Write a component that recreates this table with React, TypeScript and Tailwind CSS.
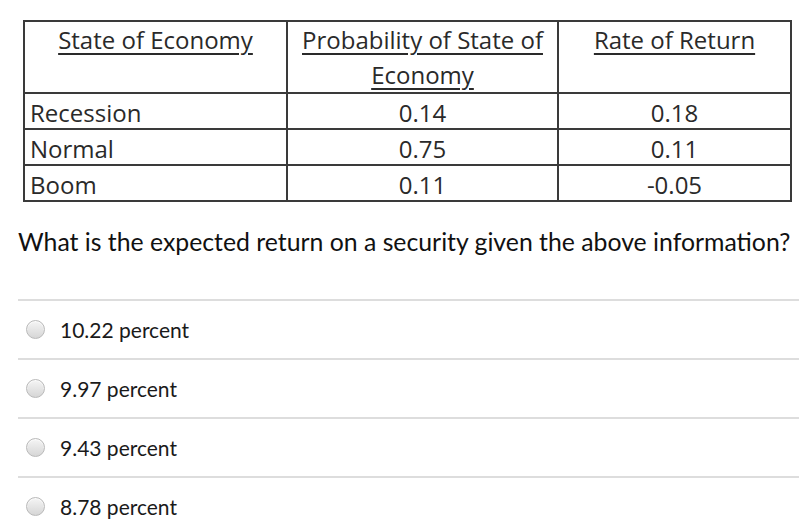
import React from 'react';

const rows = [
  { state: 'Recession', prob: '0.14', rate: '0.18' },
  { state: 'Normal', prob: '0.75', rate: '0.11' },
  { state: 'Boom', prob: '0.11', rate: '-0.05' },
];

const options = ['10.22 percent', '9.97 percent', '9.43 percent', '8.78 percent'];

const Radio: React.FC = () => (
  <span className="inline-block w-[19px] h-[19px] rounded-full border border-[#b9b9b9] bg-gradient-to-b from-[#f5f5f5] to-[#d6d6d6] shadow-[inset_0_1px_1px_rgba(255,255,255,0.8)]" />
);

export default function App() {
  return (
    <div className="w-[812px] h-[531px] overflow-hidden bg-white pt-[20px]">
      <table
        className="ml-[23px] w-[769px] border-collapse text-[#2a2a2a] text-[24px]"
        style={{ fontFamily: '"Open Sans", "Liberation Sans", sans-serif' }}
      >
        <thead>
          <tr className="h-[71px]">
            <th className="w-[263px] border-2 border-[#3a3a3a] align-top font-normal leading-[35px] pt-0">
              <span className="underline underline-offset-[4px] decoration-[1.5px]">State of Economy</span>
            </th>
            <th className="w-[271px] border-2 border-[#3a3a3a] align-top font-normal leading-[35px] pt-0">
              <span className="underline underline-offset-[4px] decoration-[1.5px]">Probability of State of</span>
              <br />
              <span className="underline underline-offset-[4px] decoration-[1.5px]">Economy</span>
            </th>
            <th className="border-2 border-[#3a3a3a] align-top font-normal leading-[35px] pt-0">
              <span className="underline underline-offset-[4px] decoration-[1.5px]">Rate of Return</span>
            </th>
          </tr>
        </thead>
        <tbody>
          {rows.map(r => (
            <tr key={r.state} className="h-[36px]">
              <td className="border-2 border-[#3a3a3a] pl-[5px] leading-[31px] pt-[2px]">{r.state}</td>
              <td className="border-2 border-[#3a3a3a] text-center leading-[31px] pt-[2px]">{r.prob}</td>
              <td className="border-2 border-[#3a3a3a] text-center leading-[31px] pt-[2px]">{r.rate}</td>
            </tr>
          ))}
        </tbody>
      </table>

      <p
        className="mt-[25px] ml-[18px] text-[24.8px] leading-[30px] text-[#111] whitespace-nowrap"
        style={{ fontFamily: 'Lato, "Open Sans", sans-serif' }}
      >
        What is the expected return on a security given the above information?
      </p>

      <ul className="mt-[42px] ml-[18px] w-[781px]" style={{ fontFamily: 'Lato, "Open Sans", sans-serif' }}>
        {options.map(o => (
          <li key={o} className="h-[59px] border-t-2 border-[#dddddd] flex items-center">
            <span className="ml-[8px] flex items-center">
              <Radio />
            </span>
            <span className="ml-[15px] text-[21px] text-[#1a1a1a]">{o}</span>
          </li>
        ))}
      </ul>
    </div>
  );
}
